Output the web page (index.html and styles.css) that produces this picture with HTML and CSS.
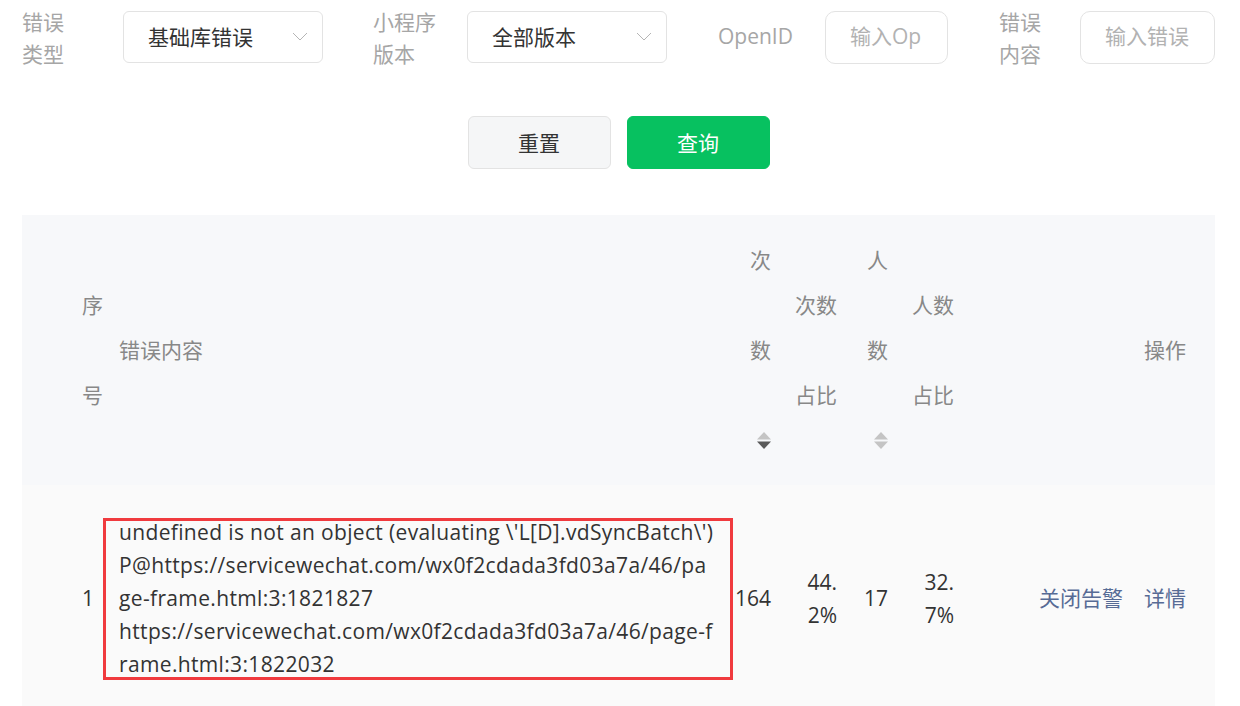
FILE: index.html
```html
<!DOCTYPE html>
<html lang="zh-CN">
<head>
    <meta charset="UTF-8">
    <meta name="viewport" content="width=device-width, initial-scale=1.0">
    <title>错误列表</title>
    <link rel="stylesheet" href="styles.css">
</head>
<body>
    <div class="page">
        <div class="filters">
            <label class="field-label label-type">错误类型</label>
            <div class="select">
                <span>基础库错误</span>
                <svg class="chevron" width="16" height="9" viewBox="0 0 16 9"><polyline points="1,1 8,8 15,1" fill="none" stroke="#b5b5b5" stroke-width="1"/></svg>
            </div>
            <label class="field-label label-version">小程序版本</label>
            <div class="select">
                <span>全部版本</span>
                <svg class="chevron" width="16" height="9" viewBox="0 0 16 9"><polyline points="1,1 8,8 15,1" fill="none" stroke="#b5b5b5" stroke-width="1"/></svg>
            </div>
            <label class="field-label label-openid" for="openid">OpenID</label>
            <input type="text" id="openid" class="text-input input-openid" placeholder="输入OpenID">
            <label class="field-label label-content" for="content">错误内容</label>
            <input type="text" id="content" class="text-input input-content" placeholder="输入错误内容">
        </div>

        <div class="actions">
            <button class="btn btn-default">重置</button>
            <button class="btn btn-primary">查询</button>
        </div>

        <table class="error-table">
            <colgroup>
                <col style="width: 81px">
                <col style="width: 630px">
                <col style="width: 50px">
                <col style="width: 66px">
                <col style="width: 51px">
                <col style="width: 66px">
                <col style="width: 249px">
            </colgroup>
            <thead>
                <tr>
                    <th class="cell-index"><div class="th-stack">序号</div></th>
                    <th class="cell-message">错误内容</th>
                    <th class="cell-num">
                        <div class="th-stack">次数
                            <span class="sorter">
                                <svg width="14" height="17" viewBox="0 0 14 17"><path d="M7 0 L14 7.5 H0 Z" fill="#c4c4c4"/><path d="M0 9.5 H14 L7 17 Z" fill="#5a5a5a"/></svg>
                            </span>
                        </div>
                    </th>
                    <th class="cell-num"><div class="th-stack wide">次数占比</div></th>
                    <th class="cell-num">
                        <div class="th-stack">人数
                            <span class="sorter">
                                <svg width="14" height="17" viewBox="0 0 14 17"><path d="M7 0 L14 7.5 H0 Z" fill="#c4c4c4"/><path d="M0 9.5 H14 L7 17 Z" fill="#c4c4c4"/></svg>
                            </span>
                        </div>
                    </th>
                    <th class="cell-num"><div class="th-stack wide">人数占比</div></th>
                    <th class="cell-op">操作</th>
                </tr>
            </thead>
            <tbody>
                <tr>
                    <td class="cell-index">1</td>
                    <td class="cell-message">
                        undefined is not an object (evaluating \'L[D].vdSyncBatch\')<br>P@https://servicewechat.com/wx0f2cdada3fd03a7a/46/pa<br>ge-frame.html:3:1821827<br>https://servicewechat.com/wx0f2cdada3fd03a7a/46/page-f<br>rame.html:3:1822032
                        <div class="highlight"></div>
                    </td>
                    <td class="cell-num">164</td>
                    <td class="cell-num cell-ratio">44.2%</td>
                    <td class="cell-num">17</td>
                    <td class="cell-num cell-ratio">32.7%</td>
                    <td class="cell-op">
                        <a href="#" class="link">关闭告警</a><a href="#" class="link">详情</a>
                    </td>
                </tr>
            </tbody>
        </table>
    </div>
</body>
</html>
```

FILE: styles.css
```css
body {
    margin: 0;
    font-family: "Open Sans", "Noto Sans CJK SC", sans-serif;
    font-size: 21px;
    color: #333333;
    background-color: #FFFFFF;
}

.page {
    padding: 11px 25px 0 22px;
}

/* Filter bar */
.filters {
    display: flex;
    align-items: center;
    height: 52px;
}

.field-label {
    flex-shrink: 0;
    color: #a6a6a6;
    line-height: 32px;
    padding-top: 2px;
}

.label-type {
    width: 43px;
    margin-right: 58px;
}

.label-version {
    width: 64px;
    margin-left: 50px;
    margin-right: 30px;
}

.label-openid {
    width: 77px;
    margin-left: 51px;
    margin-right: 30px;
    padding-top: 0;
    padding-bottom: 2px;
    white-space: nowrap;
}

.label-content {
    width: 43px;
    margin-left: 51px;
    margin-right: 38px;
}

.select {
    flex-shrink: 0;
    width: 200px;
    height: 52px;
    box-sizing: border-box;
    display: flex;
    align-items: center;
    justify-content: space-between;
    padding: 0 14px 2px 24px;
    border: 1px solid #e3e3e3;
    border-radius: 6px;
    cursor: pointer;
}

.text-input {
    flex-shrink: 0;
    height: 53px;
    box-sizing: border-box;
    padding: 0 24px 2px;
    border: 1px solid #e3e3e3;
    border-radius: 10px;
    font: inherit;
    color: #333333;
    background: #FFFFFF;
    outline: none;
}

.text-input::placeholder {
    color: #b2b2b2;
}

.input-openid {
    width: 123px;
    padding-right: 26px;
}

.input-content {
    width: 135px;
}

/* Buttons */
.actions {
    display: flex;
    justify-content: center;
    gap: 16px;
    margin-top: 53px;
}

.btn {
    width: 143px;
    height: 53px;
    padding: 0 0 2px;
    border: 1px solid #e3e3e3;
    border-radius: 6px;
    font: inherit;
    cursor: pointer;
}

.btn-default {
    background-color: #f5f6f7;
    color: #333333;
}

.btn-primary {
    background-color: #07c160;
    border-color: #07c160;
    color: #FFFFFF;
}

/* Table */
.error-table {
    width: 100%;
    margin-top: 46px;
    border-collapse: collapse;
    table-layout: fixed;
}

.error-table th {
    height: 270px;
    padding: 0;
    background-color: #f7f8fa;
    color: #888888;
    font-weight: normal;
    line-height: 90px;
    text-align: left;
    vertical-align: middle;
}

.error-table td {
    padding: 0;
    background-color: #fafafa;
    line-height: 33px;
    vertical-align: middle;
}

.th-stack {
    width: 22px;
}

.th-stack.wide {
    width: 43px;
}

.cell-index {
    padding-left: 60px !important;
}

.error-table th.cell-message {
    padding-left: 16px;
}

.error-table td.cell-message {
    position: relative;
    padding: 31px 16px;
    white-space: nowrap;
    letter-spacing: 0.35px;
}

.highlight {
    position: absolute;
    top: 33px;
    left: 0;
    right: 0;
    height: 162px;
    box-sizing: border-box;
    border: 3px solid #f03a3e;
    pointer-events: none;
}

.error-table .cell-num {
    text-align: right;
    padding-right: 12px;
}

.cell-num .th-stack {
    margin-left: auto;
}

.error-table td.cell-ratio {
    padding-left: 19px;
    word-break: break-all;
}

.sorter {
    display: flex;
    height: 90px;
    align-items: center;
    justify-content: flex-end;
}

.error-table .cell-op {
    text-align: right;
    padding-right: 29px;
}

.link {
    color: #576b95;
    text-decoration: none;
}

.link + .link {
    margin-left: 21px;
}
```
